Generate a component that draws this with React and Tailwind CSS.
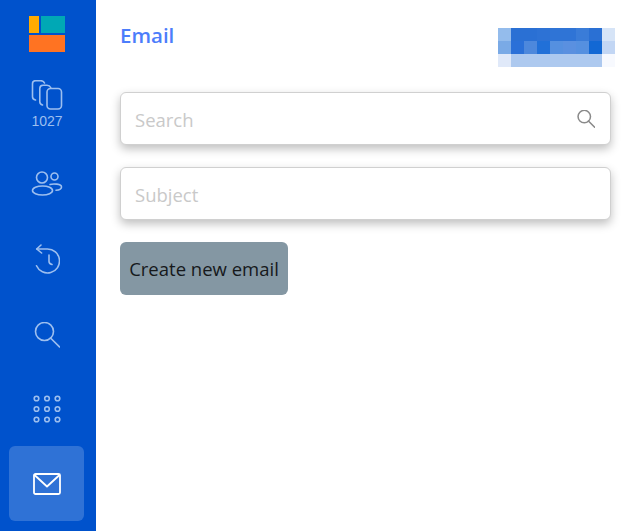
import React from 'react';

const blur = [
  '#94bcec', '#2a70d4', '#2a70d4', '#2d72d5', '#2f74d6', '#2f74d6', '#3a7cd8', '#2a70d4', '#d6e4f7',
  '#7aaae6', '#2a70d8', '#4d88dc', '#2170d8', '#5590e0', '#5a90e0', '#5590e0', '#1268d4', '#c2d6f4',
  '#e0e9f9', '#adc9ef', '#adc9ef', '#adc9ef', '#adc9ef', '#adc9ef', '#adc9ef', '#adc9ef', '#f7f9fe',
];

const CopiesIcon = () => (
  <svg width="32" height="32" viewBox="0 0 32 32" fill="none" stroke="currentColor" strokeWidth="1.6" strokeLinecap="round">
    <rect x="16" y="8.500" width="14.500" height="20.500" rx="3.500" />
    <path d="M11.500 25c-1.600-.4-2.700-1.600-2.700-3.200V8.500c0-2 1.400-3.300 3.200-3.300h4c1.700 0 3 .8 3.700 2.300" />
    <path d="M4.500 20c-1.800-.3-3-1.500-3-3.200V3.700c0-1.900 1.400-3 3.100-3h5.200c1.700 0 3.100.8 3.700 2.300" />
  </svg>
);

const PeopleIcon = () => (
  <svg width="32" height="26" viewBox="0 0 32 26" fill="none" stroke="currentColor" strokeWidth="1.600" strokeLinecap="round">
    <circle cx="11" cy="6.500" r="5.500" />
    <circle cx="23.500" cy="5.500" r="3.500" />
    <ellipse cx="11.500" cy="19.500" rx="10" ry="4.500" />
    <path d="M19 13.500c3-1 11.500-.8 11.500 2.500 0 1.800-2 3-5.500 3.300" />
  </svg>
);

const HistoryIcon = () => (
  <svg width="26" height="30" viewBox="0 0 26 30" fill="none" stroke="currentColor" strokeWidth="1.600" strokeLinecap="round" strokeLinejoin="round">
    <path d="M2.700 5H13.500A12 12 0 1 1 2.500 21.800" />
    <path d="M7 1 2.700 5l4.900 4" />
    <path d="M15 11v6.500c0 1.500 1 2.500 3 3" />
  </svg>
);

const SearchIcon = ({ size = 26, width = 1.6, className = '' }) => (
  <svg width={size} height={size} viewBox="0 0 26 26" fill="none" stroke="currentColor" strokeWidth={width} strokeLinecap="round" className={className}>
    <circle cx="10.500" cy="9.500" r="9" />
    <path d="m16.500 16 9 9" />
  </svg>
);

const GridIcon = () => (
  <svg width="28" height="28" viewBox="0 0 28 28" fill="none" stroke="currentColor" strokeWidth="1.600">
    {[3.500, 14, 24.500].map(y =>
      [3.500, 14, 24.500].map(x => <circle key={`${x}-${y}`} cx={x} cy={y} r="2.300" />)
    )}
  </svg>
);

const MailIcon = () => (
  <svg width="28" height="22" viewBox="0 0 28 22" fill="none" stroke="currentColor" strokeWidth="1.800" strokeLinejoin="round" strokeLinecap="round">
    <rect x="1" y="1" width="26" height="20" rx="1.500" />
    <path d="m1.500 2 12.500 11.500L26.500 2" />
  </svg>
);

const Logo = () => (
  <div className="flex flex-col gap-[2px] w-[36px]">
    <div className="flex gap-[2px] h-[17px]">
      <div className="w-[10px] bg-[#ffab00]" />
      <div className="flex-1 bg-[#00a8b5]" />
    </div>
    <div className="h-[17px] bg-[#ff7322]" />
  </div>
);

export default function App() {
  return (
    <div className="flex h-[531px] w-[635px] overflow-hidden bg-white font-['Open_Sans','Noto_Sans',sans-serif]">
      {/* Sidebar */}
      <aside className="w-[96px] shrink-0 bg-[#0052cc] flex flex-col items-center pr-[3px] text-[#9dbfef]">
        <div className="mt-[16px] ml-[1px]"><Logo /></div>
        <div className="mt-[28px] ml-[1px] flex flex-col items-center">
          <CopiesIcon />
          <span className="text-[14px] leading-[16px] font-['Liberation_Sans',sans-serif] mt-[1px]">1027</span>
        </div>
        <div className="mt-[42px] ml-[1px] h-[26px]"><PeopleIcon /></div>
        <div className="mt-[47px] ml-[1px] h-[30px]"><HistoryIcon /></div>
        <div className="mt-[48px] ml-[1px] h-[26px]"><SearchIcon /></div>
        <div className="mt-[47px] ml-[1px] h-[28px]"><GridIcon /></div>
        <div className="mt-[23px] w-[75px] h-[75px] rounded-[6px] bg-[#2f72d6] flex items-center justify-center text-white">
          <MailIcon />
        </div>
      </aside>

      {/* Content */}
      <main className="flex-1 pl-[24px] pr-[24px]">
        <div className="flex justify-between h-[92px]">
          <h1 className="mt-[20px] text-[20.500px] leading-[30px] font-semibold text-[#4c7dfb]">Email</h1>
          <div className="mt-[28px] mr-[-4px] grid grid-cols-[repeat(9,13px)] grid-rows-[repeat(3,13px)] h-[39px]">
            {blur.map((c, i) => (
              <div key={i} style={{ backgroundColor: c }} />
            ))}
          </div>
        </div>

        <div className="flex items-center h-[53px] rounded-[6px] border border-[#d0d0d0] bg-white shadow-[0_4px_10px_rgba(0,0,0,0.25)] pl-[14px] pr-[15px]">
          <span className="flex-1 pt-[3px] text-[18.500px] text-[#c9c9c9]">Search</span>
          <SearchIcon size={18} width={2.2} className="text-[#8a8a8a]" />
        </div>

        <div className="mt-[22px] flex items-center h-[53px] rounded-[6px] border border-[#d0d0d0] bg-white shadow-[0_4px_10px_rgba(0,0,0,0.25)] pl-[14px]">
          <span className="pt-[3px] text-[18.500px] text-[#c9c9c9]">Subject</span>
        </div>

        <button className="mt-[22px] block h-[53px] w-[168px] rounded-[6px] bg-[#8497a3] text-[18.500px] text-[#16191b] text-center">
          Create new email
        </button>
      </main>
    </div>
  );
}
